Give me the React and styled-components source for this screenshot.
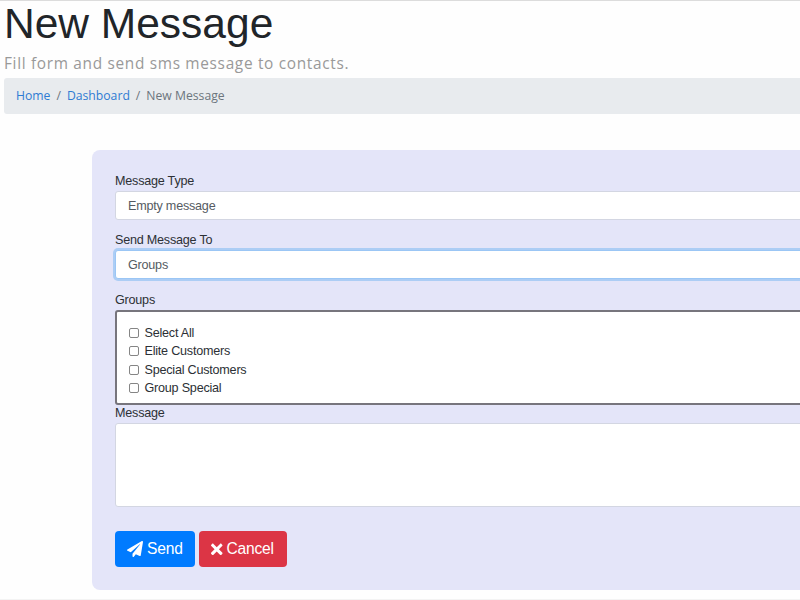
import React from 'react';
import styled, { createGlobalStyle } from 'styled-components';
import { FaPaperPlane, FaTimes } from 'react-icons/fa';

const GlobalStyle = createGlobalStyle`
  *, *::before, *::after { box-sizing: border-box; }
  body {
    margin: 0;
    background: #fefefe;
    color: #2c3035;
    font-family: "Liberation Sans", Arial, sans-serif;
    font-size: 12.6px;
    letter-spacing: -0.22px;
    overflow: hidden;
  }
`;

const Page = styled.main`
  width: 100%;
  height: 600px;
  padding-left: 4px;
  border-top: 1px solid #dcdcdc;
  border-bottom: 1px solid #f3f3f3;
  overflow: hidden;
`;

const Title = styled.h1`
  margin: 0;
  height: 49px;
  color: #212529;
  font-size: 42.5px;
  font-weight: 400;
  line-height: 45px;
  letter-spacing: 0;
  white-space: nowrap;
`;

const Subtitle = styled.p`
  margin: 0;
  height: 28px;
  color: #999;
  font-family: "Open Sans", sans-serif;
  font-size: 15.4px;
  line-height: 27px;
  letter-spacing: 0.68px;
  white-space: nowrap;
`;

const Breadcrumb = styled.nav`
  display: flex;
  align-items: center;
  height: 36px;
  padding: 0 12px 1px;
  border-radius: 3px 0 0 3px;
  background: #e8ebee;
  color: #6c757d;
  font-family: "Open Sans", sans-serif;
  font-size: 12.2px;
  letter-spacing: 0;
`;

const Crumb = styled.a`
  color: #2f7bd3;
  text-decoration: none;

  &::after {
    content: "/";
    padding: 0 6px;
    color: #6c757d;
  }
`;

const Panel = styled.form`
  width: 800px;
  height: 440px;
  margin: 36px 0 0 88px;
  padding: 23px;
  border-radius: 8px;
  background: #e4e5f9;
`;

const Field = styled.div`
  display: flex;
  flex-direction: column;
  margin-bottom: ${(p) => p.$gap}px;
`;

const Label = styled.label`
  height: 18px;
  line-height: 17px;
`;

const Select = styled.div`
  height: 29px;
  padding: 0 12px;
  border: 1px solid ${(p) => (p.$focused ? '#9bc6f5' : '#d3d6e2')};
  border-radius: 3px;
  background: #fff;
  box-shadow: ${(p) => (p.$focused ? '0 0 0 2px #accdf5' : 'none')};
  color: #555b62;
  line-height: 28px;
`;

const GroupList = styled.div`
  height: 95px;
  padding: 12px;
  border: 2px solid #77757d;
  border-radius: 3px;
  background: #fff;
`;

const Option = styled.label`
  display: flex;
  align-items: center;
  height: 18.25px;
  line-height: 14px;
`;

const Checkbox = styled.input`
  appearance: none;
  width: 10px;
  height: 10px;
  margin: 0 5.5px 0 0;
  border: 1px solid #858585;
  border-radius: 2px;
  background: #fff;
`;

const TextArea = styled.textarea`
  height: 84px;
  border: 1px solid #d3d6e2;
  border-radius: 3px;
  background: #fff;
  resize: none;
`;

const Actions = styled.div`
  display: flex;
  gap: 4px;
`;

const Button = styled.button`
  display: flex;
  align-items: center;
  gap: 4px;
  width: ${(p) => p.$width}px;
  height: 36px;
  padding: 0 0 0 12px;
  border: 0;
  border-radius: 4px;
  background: ${(p) => p.$color};
  color: #fff;
  font: 15.6px/18px "Liberation Sans", Arial, sans-serif;
  letter-spacing: -0.2px;

  span {
    padding-bottom: 1px;
  }
`;

const CancelIcon = styled(FaTimes)`
  width: 11.5px;
  height: 16.7px;
`;

const groups = ['Select All', 'Elite Customers', 'Special Customers', 'Group Special'];

export default function App() {
  return (
    <>
      <GlobalStyle />
      <Page>
        <Title>New Message</Title>
        <Subtitle>Fill form and send sms message to contacts.</Subtitle>
        <Breadcrumb>
          <Crumb href="#">Home</Crumb>
          <Crumb href="#">Dashboard</Crumb>
          <span>New Message</span>
        </Breadcrumb>
        <Panel>
          <Field $gap={12}>
            <Label>Message Type</Label>
            <Select>Empty message</Select>
          </Field>
          <Field $gap={13}>
            <Label>Send Message To</Label>
            <Select $focused>Groups</Select>
          </Field>
          <Field $gap={0}>
            <Label>Groups</Label>
            <GroupList>
              {groups.map((name) => (
                <Option key={name}>
                  <Checkbox type="checkbox" />
                  {name}
                </Option>
              ))}
            </GroupList>
          </Field>
          <Field $gap={24}>
            <Label htmlFor="message">Message</Label>
            <TextArea id="message" />
          </Field>
          <Actions>
            <Button type="button" $width={80} $color="#007bff">
              <FaPaperPlane size={16} />
              <span>Send</span>
            </Button>
            <Button type="button" $width={88} $color="#dc3545">
              <CancelIcon />
              <span>Cancel</span>
            </Button>
          </Actions>
        </Panel>
      </Page>
    </>
  );
}
